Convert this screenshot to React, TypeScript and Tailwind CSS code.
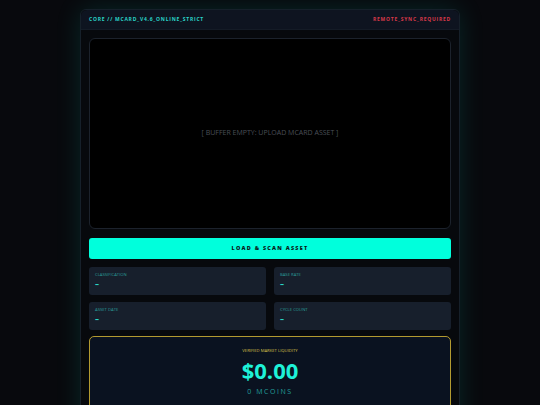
import React from "react";

const stats = [
  { label: "CLASSIFICATION", value: "–" },
  { label: "BASE RATE", value: "–" },
  { label: "ASSET DATE", value: "–" },
  { label: "CYCLE COUNT", value: "–" },
];

const App: React.FC = () => {
  return (
    <div
      className="h-[405px] w-full bg-[#08090d] pt-[9px] flex justify-center overflow-hidden"
      style={{ fontFamily: '"Open Sans", "Liberation Sans", sans-serif' }}
    >
      <div className="w-[380px] h-[420px] shrink-0 rounded-t-[6px] border border-[#16202a] bg-[#07090d] shadow-[0_0_26px_rgba(0,220,190,0.14)]">
        {/* Header */}
        <div className="h-[20px] flex items-center justify-between px-[8px] bg-[#0e1420] border-b border-[#141b26] rounded-t-[6px]">
          <span className="text-[5px] font-bold tracking-[0.15em] text-[#2ad4c8]">
            CORE // MCARD_V4.6_ONLINE_STRICT
          </span>
          <span className="text-[5px] font-bold tracking-[0.15em] text-[#d8394a]">
            REMOTE_SYNC_REQUIRED
          </span>
        </div>

        {/* Body */}
        <div className="px-[8px] pt-[8px] flex flex-col">
          <div className="h-[191px] rounded-[6px] border border-[#1c222c] bg-black flex items-center justify-center">
            <span className="text-[7px] text-[#4a4f57]">
              [ BUFFER EMPTY: UPLOAD MCARD ASSET ]
            </span>
          </div>

          <button className="mt-[9px] h-[21px] rounded-[3px] bg-[#00ffdc] flex items-center justify-center">
            <span className="text-[5.5px] font-extrabold tracking-[0.22em] text-[#0b1a1a]">
              LOAD &amp; SCAN ASSET
            </span>
          </button>

          <div className="mt-[8px] grid grid-cols-2 gap-x-[8px] gap-y-[7px]">
            {stats.map((s) => (
              <div
                key={s.label}
                className="h-[28px] rounded-[3px] bg-[#171f2c] px-[6px] pt-[5px] flex flex-col"
              >
                <span className="text-[4.2px] leading-[5px] text-[#2a9c98]">{s.label}</span>
                <span className="mt-[2px] text-[8px] leading-[10px] font-bold text-[#2ad4c8]">
                  {s.value}
                </span>
              </div>
            ))}
          </div>

          <div className="mt-[6px] h-[90px] rounded-[5px] border border-[#b39a30] bg-[#0a1220] flex flex-col items-center pt-[11px]">
            <span className="text-[4.2px] leading-[5px] text-[#d8c04a]">VERIFIED MARKET LIQUIDITY</span>
            <span className="mt-[4px] text-[22px] leading-[26px] font-bold text-[#1ef2d8]">$0.00</span>
            <span className="mt-[4px] text-[7px] leading-[9px] tracking-[0.22em] text-[#239e9a]">
              0 MCOINS
            </span>
          </div>
        </div>
      </div>
    </div>
  );
};

export default App;
